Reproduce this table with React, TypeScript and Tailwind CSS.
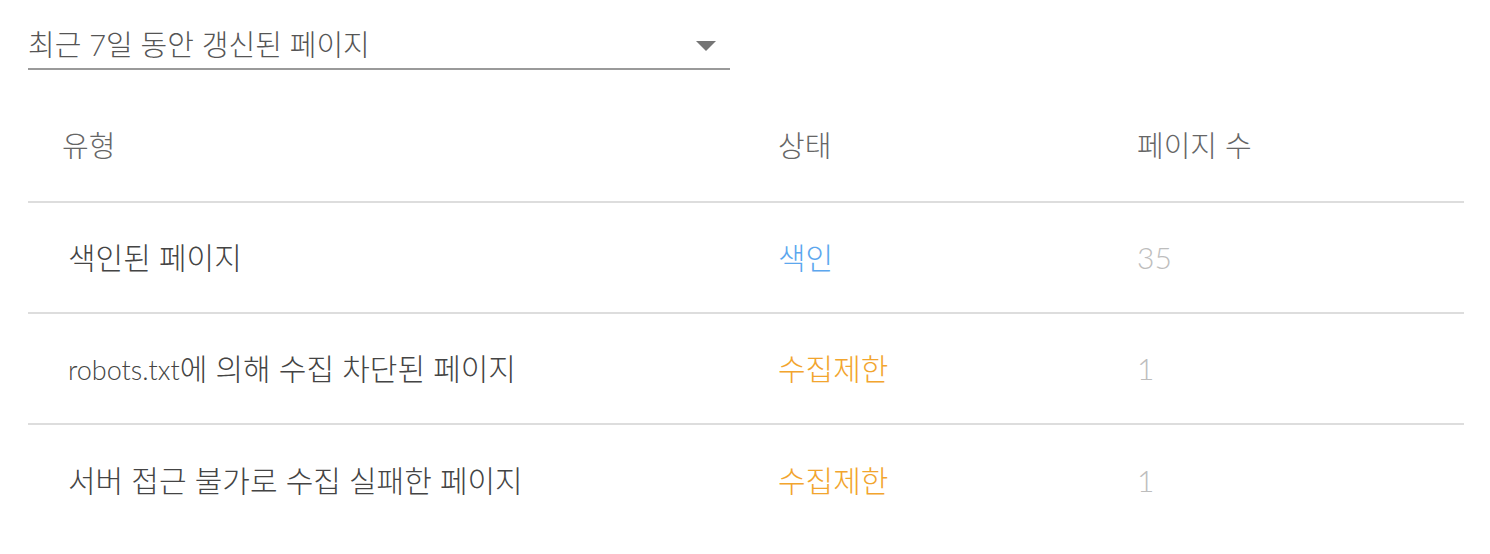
import type { ReactNode } from 'react';

type Row = { type: ReactNode; status: string; tone: string; count: string };

const rows: Row[] = [
  { type: '색인된 페이지', status: '색인', tone: 'text-[#5ca7ee]', count: '35' },
  {
    type: (
      <>
        <span className="text-[27px]">robots.txt</span>에 의해 수집 차단된 페이지
      </>
    ),
    status: '수집제한',
    tone: 'text-[#f2a52e]',
    count: '1',
  },
  { type: '서버 접근 불가로 수집 실패한 페이지', status: '수집제한', tone: 'text-[#f2a52e]', count: '1' },
];

const font = "font-['Lato','Noto_Sans_CJK_KR',sans-serif]";

export default function App() {
  return (
    <div className={`min-h-screen w-full bg-white pl-[28px] pr-[26px] pt-[20px] font-light ${font}`}>
      <button className="flex h-[50px] w-[702px] items-center justify-between border-b-2 border-[#9a9a9a] pr-[14px] text-left">
        <span className="text-[29px] leading-none text-[#555]">최근 7일 동안 갱신된 페이지</span>
        <svg width="20" height="10" viewBox="0 0 20 10" className="mt-[4px]">
          <path d="M0 0h20L10 10z" fill="#757575" />
        </svg>
      </button>

      <div className="mt-[21px]">
        <div className="grid h-[112px] grid-cols-[710px_359px_1fr] items-center border-b-2 border-[#dddddd] text-[29px] text-[#666]">
          <div className="pl-[34px]">유형</div>
          <div className="pl-[40px]">상태</div>
          <div className="pl-[40px]">페이지 수</div>
        </div>
        {rows.map((r, i) => (
          <div
            key={i}
            className={`grid h-[111px] grid-cols-[710px_359px_1fr] items-center text-[30px] ${
              i < rows.length - 1 ? 'border-b-2 border-[#dddddd]' : ''
            }`}
          >
            <div className="pl-[40px] text-[#444]">{r.type}</div>
            <div className={`pl-[40px] ${r.tone}`}>{r.status}</div>
            <div className="pl-[40px] text-[#bdbdbd]">{r.count}</div>
          </div>
        ))}
      </div>
    </div>
  );
}
